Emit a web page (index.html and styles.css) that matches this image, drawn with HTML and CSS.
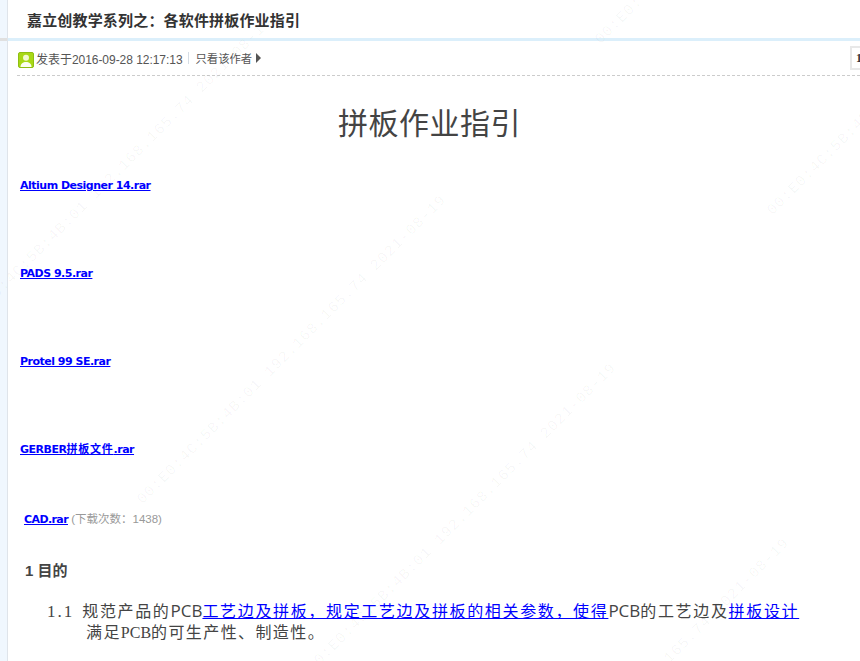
FILE: index.html
```html
<!DOCTYPE html>
<html lang="zh-CN">
<head>
<meta charset="utf-8">
<title>拼板作业指引</title>
<link rel="stylesheet" href="styles.css">
</head>
<body>
<div class="page">
  <aside class="rail"><div class="rail-tick"></div></aside>
  <main class="main">
    <header class="title-bar"><h1>嘉立创教学系列之<span class="tc">：</span>各软件拼板作业指引</h1></header>
    <div class="post">
      <div class="meta">
        <span class="avatar"><svg viewBox="0 0 16 16" width="16" height="16"><rect x="0.5" y="0.5" width="15" height="15" rx="1.500" fill="#a8d816" stroke="#8fbf12"/><circle cx="8" cy="5.800" r="3" fill="#f2fad0"/><path d="M2.500 15c0-3.500 2.500-5 5.500-5s5.500 1.500 5.500 5z" fill="#fbfef0"/></svg></span>
        <span class="date">发表于2016-09-28 12:17:13</span>
        <span class="sep"></span>
        <span class="only">只看该作者</span>
        <span class="arrow"></span>
        <span class="floor">1</span>
      </div>
      <article class="content">
        <h2 class="doc-title">拼板作业指引</h2>
        <p class="file"><a href="#">Altium Designer 14.rar</a></p>
        <p class="file"><a href="#">PADS 9.5.rar</a></p>
        <p class="file"><a href="#">Protel 99 SE.rar</a></p>
        <p class="file"><a href="#">GERBER<span class="cjk">拼板文件</span>.rar</a></p>
        <p class="file-last"><a href="#">CAD.rar</a> <span class="count">(下载次数：1438)</span></p>
        <h3 class="section">1 目的</h3>
        <p class="item"><span class="num">1.1</span>规范产品的<span class="pcb">PCB</span><a href="#">工艺边及拼板，规定工艺边及拼板的相关参数，使得</a><span class="pcb">PCB</span>的工艺边及<a href="#">拼板设计</a></p>
        <p class="item-cont">满足<span class="pcb-serif">PCB</span>的可生产性、制造性。</p>
      </article>
    </div>
  </main>
</div>
<div class="marks" aria-hidden="true">
  <span class="mark m1">00:E0:4C:5B:4B:01 192.168.165.74 2021-08-19</span>
  <span class="mark m2">00:E0:4C:5B:4B:01 192.168.165.74 2021-08-19</span>
  <span class="mark m3">00:E0:4C:5B:4B:01 192.168.165.74 2021-08-19</span>
  <span class="mark m4">00:E0:4C:5B:4B:01 192.168.165.74 2021-08-19</span>
  <span class="mark m5">00:E0:4C:5B:4B:01 192.168.165.74 2021-08-19</span>
  <span class="mark m6">00:E0:4C:5B:4B:01 192.168.165.74 2021-08-19</span>
</div>
</body>
</html>
```
FILE: styles.css
```css
* { box-sizing: border-box; }
html, body { margin: 0; padding: 0; height: 100%; overflow: hidden; background: #fff; }
body { font-family: "Liberation Sans", "Noto Sans CJK SC", sans-serif; color: #444; position: relative; }
.page { display: flex; height: 661px; }
.rail { width: 8px; flex: none; background: #f0f7fe; border-right: 1px solid #dfe4ea; }
.rail-tick { height: 3px; margin-top: 38px; background: #e0e0e0; }
.main { flex: 1; min-width: 0; }
.title-bar { height: 41px; border-bottom: 3px solid #dbeffb; padding-left: 19px; display: flex; align-items: center; }
.title-bar h1 { margin: 0; font-size: 15px; line-height: 20px; font-weight: bold; letter-spacing: .170px; color: #333; position: relative; top: 1px; }
.tc { font-family: "Noto Sans CJK TC", sans-serif; }
.post { padding-left: 9px; }
.meta { height: 35px; border-bottom: 1px dashed #ccc; display: flex; align-items: center; font-size: 12px; color: #555; position: relative; }
.avatar { width: 16px; height: 16px; margin: 3px 0 0 1px; display: flex; }
.date { margin-left: 2px; letter-spacing: -.04px; }
.sep { width: 1px; height: 12px; background: #d5dde5; margin: 0 7px 0 5px; }
.only { font-size: 11.300px; }
.arrow { width: 0; height: 0; border-left: 5px solid #555; border-top: 5px solid transparent; border-bottom: 5px solid transparent; margin-left: 4px; }
.floor { position: absolute; right: 0; top: 5px; width: 10px; height: 24px; border: 2px solid #e8e8e8; border-right: 0; font: bold 12px/20px "Liberation Serif", serif; color: #333; padding-left: 4px; overflow: hidden; }
.content { font-family: "Noto Sans CJK SC", sans-serif; }
.doc-title { margin: 24px 0 0 -18px; text-align: center; font-size: 30px; line-height: 42px; font-weight: 400; letter-spacing: .500px; color: #444; }
a { color: #00f; text-decoration: underline; }
.file { margin: 0 0 0 3px; height: 88px; font: bold 11px/16px "DejaVu Sans", "Noto Sans CJK SC", sans-serif; letter-spacing: -.5px; }
.file:first-of-type { margin-top: 36px; }
.cjk { letter-spacing: .800px; }
.file-last { margin: -19px 0 0 7px; font: bold 11px/16px "DejaVu Sans", "Noto Sans CJK SC", sans-serif; letter-spacing: -.6px; }
.count { font: 11.500px/16px "Liberation Sans", "Noto Sans CJK SC", sans-serif; letter-spacing: 0; color: #999; }
.section { margin: 33px 0 0 8px; font: bold 15px/20px "Liberation Sans", "Noto Sans CJK SC", sans-serif; color: #444; }
.item { margin: 17px 0 0 30px; font-size: 16px; line-height: 24px; white-space: nowrap; letter-spacing: 1.650px; }
.num { margin-right: 8px; letter-spacing: 2px; font-family: "Liberation Serif", serif; font-size: 17px; }
.pcb { font-family: "Open Sans", sans-serif; letter-spacing: 0; font-size: 17px; }
.item-cont { margin: -4px 0 0 69px; font-size: 16px; line-height: 22px; letter-spacing: 1.400px; }
.pcb-serif { font-family: "Liberation Serif", serif; letter-spacing: 0; }
.marks { position: absolute; inset: 0; pointer-events: none; overflow: hidden; }
.mark { position: absolute; white-space: nowrap; font: 15px/16px "Liberation Mono", monospace; letter-spacing: 1px; color: rgba(0,0,0,.04); transform: rotate(-45deg); transform-origin: left bottom; }
.m1 { left: -28px; top: 314px; }
.m2 { left: 146px; top: 492px; }
.m3 { left: 316px; top: 660px; }
.m4 { left: 776px; top: 203px; }
.m5 { left: 489px; top: 835px; }
.m6 { left: 604px; top: 32px; }
```
